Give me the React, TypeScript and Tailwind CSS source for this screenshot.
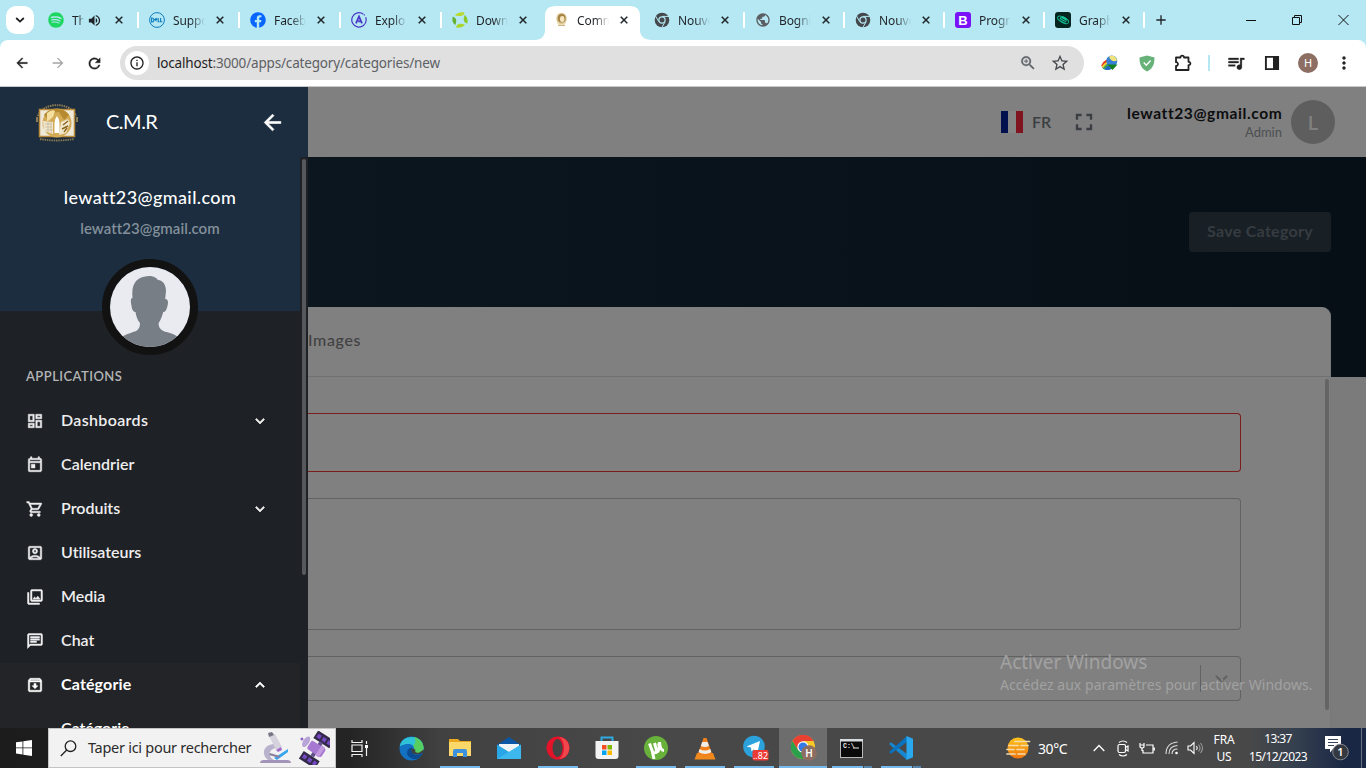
import React from "react";
import {
  MdOutlineDashboard, MdOutlineToday, MdOutlineShoppingCart, MdOutlineAccountBox,
  MdOutlinePhotoLibrary, MdOutlineChat, MdOutlineArchive, MdExpandMore, MdExpandLess,
  MdArrowBack, MdArrowForward, MdRefresh, MdFullscreen, MdVolumeUp, MdClose, MdAdd,
  MdStarBorder, MdQueueMusic, MdMoreVert, MdOutlineInfo, MdZoomIn, MdPublic,
} from "react-icons/md";
import { FaSpotify, FaFacebook } from "react-icons/fa";

const SEGOE = "font-['Noto_Sans',sans-serif]";
const MULI = "font-['Lato',sans-serif] [font-variant-ligatures:none]";
const BOLD_ICON = "[&>path]:stroke-current [&>path[fill=none]]:stroke-none";

const DellIcon = () => (
  <svg width="16" height="16" viewBox="0 0 16 16" fill="none" stroke="#0d7dbf">
    <circle cx="8" cy="8" r="7.400" strokeWidth="1" />
    <path d="M2.600 6v4h.6c2.300 0 2.300-4 0-4zM7.600 6.200 5.800 7.600 7.600 9.200M6.300 8.500 8.300 6.900M9.200 6v3.800h1.500M11.600 6v3.800h1.700" strokeWidth="1.100" />
  </svg>
);

const ApolloIcon = () => (
  <svg width="16" height="16" viewBox="0 0 16 16" fill="none" stroke="#4a35c8">
    <path d="M12.4 2.2A7.2 7.2 0 1 0 15.2 8 7 7 0 0 0 14.6 5.2" strokeWidth="1.2" />
    <path d="M5 11.3 8 4.4l3 6.9M7.2 9.4h2.4" strokeWidth="1.8" />
    <circle cx="13.4" cy="2.9" r=".7" fill="#4a35c8" stroke="none" />
  </svg>
);

const LeafRing = () => (
  <svg width="16" height="16" viewBox="0 0 16 16">
    <path d="M3 3.500C5 .5 9 0 12.500.5 12 3.500 9 4.500 6 4z" fill="#b9d92f" />
    <path d="M12.500 3C15.500 5 16 8 15.300 11.500c-2.600-.5-4.300-3-3.300-6z" fill="#8cc828" />
    <path d="M13 12.500C11 15.500 7.500 16 4 15.500c.3-3 3-4.300 6-3.500z" fill="#a9d52c" />
    <path d="M3.500 13C.5 11 0 8.500.7 4.500 3.300 5.500 5 7.500 4 10.500z" fill="#63b234" />
  </svg>
);

const Emblem = () => (
  <svg width="11" height="16" viewBox="0 0 11 16">
    <ellipse cx="5.500" cy="6.700" rx="5.200" ry="5.900" fill="#dcc796" />
    <ellipse cx="5.700" cy="6.300" rx="3.900" ry="4.300" fill="#a58244" />
    <ellipse cx="6.200" cy="7" rx="2.300" ry="3" fill="#f7e6bd" />
    <path d="M1.500 10l2 3h4l2-3" stroke="#e9d9b4" fill="none" strokeWidth="1.400" />
    <path d="M2 13.500h7" stroke="#cdb684" />
  </svg>
);

const ChromeGrey = () => (
  <svg width="16" height="16" viewBox="0 0 16 16">
    <circle cx="8" cy="8" r="7.300" fill="#44484c" />
    <circle cx="8" cy="8" r="3.700" fill="#b5e8f3" />
    <circle cx="8" cy="8" r="2.500" fill="#44484c" />
    <path d="M8 4.400h7.200M4.900 9.800 1.500 4M11.100 9.800l-3.400 6" stroke="#b5e8f3" strokeWidth="1" />
  </svg>
);

const BootstrapIcon = () => (
  <span className="flex size-4 items-center justify-center rounded-[3px] bg-[#7a12f8] font-['Liberation_Sans',sans-serif] text-[13px] font-bold leading-none text-white">B</span>
);

const GraphIcon = () => (
  <svg width="16" height="16" viewBox="0 0 16 16">
    <rect width="16" height="16" rx="3" fill="#04251f" />
    <ellipse cx="8" cy="7.800" rx="6" ry="2.700" transform="rotate(28 8 8)" fill="none" stroke="#0fb58d" />
    <ellipse cx="8" cy="7.500" rx="3.600" ry="2.900" transform="rotate(28 8 8)" fill="#14c79b" />
    <path d="M5 7.500l5 2.800M6 6l5 3" stroke="#04251f" strokeWidth=".8" />
  </svg>
);

type TabData = { label: string; icon: React.ReactNode; active?: boolean; audio?: boolean; sep?: boolean; narrow?: boolean };

const tabs: TabData[] = [
  { label: "Th", icon: <FaSpotify size={16} color="#1ed760" />, audio: true, sep: true },
  { label: "Suppo", icon: <DellIcon />, sep: true },
  { label: "Faceb", icon: <FaFacebook size={16} color="#0866ff" />, sep: true },
  { label: "Explo", icon: <ApolloIcon />, sep: true },
  { label: "Down", icon: <LeafRing /> },
  { label: "Comm", icon: <Emblem />, active: true },
  { label: "Nouve", icon: <ChromeGrey /> },
  { label: "Bogni", icon: <MdPublic size={18} color="#5b5f64" />, sep: true, narrow: true },
  { label: "Nouve", icon: <ChromeGrey />, sep: true, narrow: true },
  { label: "Progr", icon: <BootstrapIcon />, sep: true, narrow: true },
  { label: "Graph", icon: <GraphIcon />, sep: true, narrow: true },
];
tabs[6].sep = true;

function Tab({ t }: { t: TabData }) {
  return (
    <div className={`relative flex h-10 shrink-0 items-center ${t.narrow ? "w-[100px]" : "w-[101px]"}`}>
      {t.active && (
        <svg className="absolute -left-2 top-0" width="118" height="40" viewBox="0 0 118 40">
          <path d="M0 40C6 40 10 36 10 30V16Q10 6 20 6H95Q105 6 105 16V30C105 36 109 40 117 40Z" fill="#fff" />
        </svg>
      )}
      <div className="relative ml-[10px] flex size-4 shrink-0 items-center justify-center">{t.icon}</div>
      <div className={`relative ml-2 overflow-hidden whitespace-nowrap pt-[2px] text-[12px] tracking-[-0.1px] text-[#1f2328] ${SEGOE} ${t.audio ? "w-[12px]" : "w-[32px]"} [mask-image:linear-gradient(to_right,#000_55%,transparent)]`}>
        {t.label}
      </div>
      {t.audio && <MdVolumeUp className="relative ml-[3px] shrink-0" size={15} color="#1f2328" />}
      <MdClose className={`absolute left-[75px] top-[14px] text-[#1b1f23] ${BOLD_ICON}`} size={12} strokeWidth={1} />
      {t.sep && <div className="absolute right-0 top-3 h-4 w-[2px] bg-white" />}
    </div>
  );
}

function Browser() {
  return (
    <div className="shrink-0 bg-[#b5e8f3]">
      <div className="flex h-10 items-center">
        <div className="ml-[6px] mr-1 flex size-7 shrink-0 items-center justify-center rounded-[10px] bg-white">
          <svg width="10" height="6" viewBox="0 0 10 6" fill="none" stroke="#1f1f1f" strokeWidth="1.8"><path d="M1.2 1 5 4.6 8.800 1" /></svg>
        </div>
        {tabs.map((t, i) => <Tab key={i} t={t} />)}
        <MdAdd className="ml-[8px]" size={16} color="#1f2328" />
        <div className="ml-auto flex items-center">
          <svg width="106" height="12" viewBox="0 0 106 12" fill="none" stroke="#111" strokeWidth="1" className="mr-[17px]">
            <path d="M3 6.500h10" />
            <path d="M49.500 3.500h7v7h-7zM51.500 3.500v-2h7v7h-2" />
            <path d="M95.500 1l10 10M105.500 1l-10 10" />
          </svg>
        </div>
      </div>
      <div className="flex h-[46px] items-center rounded-t-[8px] bg-white">
        <div className="ml-[14px] flex items-center gap-5 text-[#222]">
          <MdArrowBack className={BOLD_ICON} size={16} strokeWidth={0.5} />
          <MdArrowForward size={16} color="#a4a4a4" />
          <MdRefresh className={BOLD_ICON} size={17} strokeWidth={0.5} />
        </div>
        <div className="ml-[17px] flex h-[34px] w-[964px] items-center rounded-full bg-[#e0e0e0]">
          <div className="ml-[5px] flex size-6 items-center justify-center rounded-full bg-white">
            <MdOutlineInfo size={16} color="#222" />
          </div>
          <div className={`ml-2 text-[13.5px] tracking-[-0.17px] text-[#5d6165] ${SEGOE}`}>
            <span className="text-[#1f1f1f]">localhost</span>:3000/apps/category/categories/new
          </div>
          <MdZoomIn className={`ml-auto mr-[13px] text-[#5f6368] ${BOLD_ICON}`} size={18} strokeWidth={0.4} />
          <MdStarBorder className="mr-[14px]" size={20} color="#46494d" />
        </div>
        <svg className="ml-[17px]" width="18" height="18" viewBox="0 0 18 18">
          <ellipse cx="8" cy="11" rx="7.400" ry="4.800" transform="rotate(-18 8 11)" fill="#2368c8" />
          <path d="M1 12C3 7 8 5 12 6" stroke="#e53b22" strokeWidth="2" fill="none" />
          <path d="M1.500 13.500c2-4 6-6 10-5" stroke="#f7d52b" strokeWidth="2" fill="none" />
          <path d="M2.500 15c2-3 5-5 8-4.500" stroke="#3fae3a" strokeWidth="1.500" fill="none" />
          <circle cx="10.800" cy="7" r="5.500" fill="#357fd5" />
          <path d="M8 2.500c4-2 7.500.5 8 4-3 2-7 0-8-4z" fill="#f1e27a" />
          <path d="M6.500 10.500h10L11.500 16z" fill="#15821d" />
        </svg>
        <svg className="ml-[20px]" width="16" height="17" viewBox="0 0 16 17">
          <path d="M8 .5 15.500 2.500C15.500 9 14 13.500 8 16.500 2 13.500.5 9 .5 2.500z" fill="#67b279" />
          <path d="M4.700 7.500 7.300 10.200 11.600 5.500" fill="none" stroke="#fff" strokeWidth="1.400" />
        </svg>
        <svg className="ml-[19px]" width="18" height="18" viewBox="0 0 18 18" fill="none" stroke="#222" strokeWidth="1.800">
          <path d="M2 3.500h4.500c-.4-2.500 3.900-2.500 3.500 0h4.500v4.300c2.500-.3 2.500 3.700 0 3.400v4.800H2v-4c2.600.2 2.600-4 0-3.800z" strokeLinejoin="round" />
        </svg>
        <div className="ml-[16px] h-4 w-[2px] bg-[#b5e8f3]" />
        <MdQueueMusic className={`ml-[16px] text-[#222] ${BOLD_ICON}`} size={20} strokeWidth={0.4} />
        <svg className="ml-[18px]" width="16" height="16" viewBox="0 0 16 16"><path d="M1.900 1.900h12.200v12.200H1.900z" fill="none" stroke="#222" strokeWidth="1.900" /><path d="M9 1h6v14H9z" fill="#222" /></svg>
        <div className={`ml-[18px] flex size-5 items-center justify-center rounded-full bg-[#8d6e63] text-[11px] text-white ${SEGOE}`}>H</div>
        <MdMoreVert className="ml-[16px]" size={20} color="#222" />
      </div>
      <div className="h-px bg-[#c8c8c8]" />
    </div>
  );
}

const menu = [
  { label: "Dashboards", Icon: MdOutlineDashboard, more: true },
  { label: "Calendrier", Icon: MdOutlineToday },
  { label: "Produits", Icon: MdOutlineShoppingCart, more: true },
  { label: "Utilisateurs", Icon: MdOutlineAccountBox },
  { label: "Media", Icon: MdOutlinePhotoLibrary },
  { label: "Chat", Icon: MdOutlineChat },
];

const Logo = () => (
  <svg width="44" height="40" viewBox="0 0 44 40">
    <path d="M3 13C8-1.500 36-1.500 41 13" fill="none" stroke="#8c7a55" strokeWidth="2" strokeDasharray="1.500 .8" />
    <path d="M5 36q17 3 34 0" fill="none" stroke="#8c7a55" strokeWidth="1.800" strokeDasharray="1.500 .8" />
    <path d="M2 19v-5M42 19v-5" stroke="#8c7a55" strokeWidth="2" />
    <rect x="4.500" y="6.500" width="35" height="27" fill="#efe9da" stroke="#b98a3c" strokeWidth="1.500" />
    <circle cx="22" cy="20" r="14.500" fill="#d3aa55" />
    <path d="M9 12C14 4 29 4 34 12L29 17 24 9 17 10 14 17z" fill="#b58a30" />
    <path d="M12 10q5-4 8-2l-2 6-6 5z" fill="#f4dfa0" />
    <path d="M8 18l10 1v12l-9-3zM26 19l7-3 2 4-4 10-7 2z" fill="#efe6ce" />
    <path d="M10 21h7M10 24h7M11 27h7M13 18v11M16 18v12" stroke="#c1b08a" strokeWidth=".6" />
    <path d="M28 22l5-4M27 26l6-3M29 29l3-4" stroke="#8c671e" strokeWidth="1.400" />
    <path d="M19.500 30V20q0-4 2.500-7 2.500 3 2.500 7v10z" fill="#fff" />
  </svg>
);

function Sidebar() {
  return (
    <aside className={`flex w-[308px] shrink-0 flex-col bg-[#1e2125] ${MULI}`}>
      <div className="flex h-[70px] shrink-0 items-center bg-[#1b2d3e]">
        <div className="ml-[35px] mt-[2px]"><Logo /></div>
        <div className="mb-[2px] ml-[27px] w-[56px] text-[20px] tracking-[-0.5px] text-white">C.M.R</div>
        <MdArrowBack className={`ml-auto mr-[23px] text-white ${BOLD_ICON}`} size={25} strokeWidth={0.6} />
      </div>
      <div className="flex min-h-0 flex-1">
        <div className="flex w-[300px] flex-col overflow-hidden">
          <div className="flex h-[154px] shrink-0 flex-col items-center bg-[#1b2d3e] pt-[27px]">
            <div className="text-[18px] font-medium leading-[26px] tracking-[0.38px] text-white">lewatt23@gmail.com</div>
            <div className="mt-[7px] text-[15px] font-semibold leading-[22px] tracking-[0.05px] text-[#83909b]">lewatt23@gmail.com</div>
            <div className="relative mt-[20px] size-24 shrink-0 overflow-hidden rounded-full border-8 border-[#121212]">
              <svg width="80" height="80" viewBox="0 0 80 80">
                <rect width="80" height="80" fill="#e9ebf0" />
                <path d="M22.500 31C21 16 27 9.500 39 9c5 0 8 2.500 9 4 5 0 8 5 8 11l-.8 8c3 0 3.500 3 2 8-.8 3-2 5-4 5-1 4-3 9-4.500 11-.5 5 3 8 8 9 7 2 11 4 15 8v17H8V73c5-5 10-6 15-8 5-1 7-4 7-9-2-2-4-7-4.500-11-2 0-3.500-2-4-6-1-5-1-8 1-8z" fill="#787e86" />
              </svg>
            </div>
          </div>
          <div className="mt-[55px] flex h-[22px] shrink-0 items-center pl-[26px] text-[13px] font-semibold tracking-[0.45px] text-[#b4b5b6]">APPLICATIONS</div>
          <div className="mt-[11px] flex shrink-0 flex-col text-[16px] font-semibold text-[#eeeeef]">
            {menu.map(({ label, Icon, more }) => (
              <div key={label} className="flex h-11 items-center pl-[26px]">
                <Icon className={BOLD_ICON} size={18} strokeWidth={0.6} />
                <span className={`mb-[2px] ml-[17px] ${label === "Dashboards" ? "tracking-[0.35px]" : ""}`}>{label}</span>
                {more && <MdExpandMore className={`ml-auto mr-[31px] ${BOLD_ICON}`} size={18} strokeWidth={0.9} />}
              </div>
            ))}
          </div>
          <div className="h-[90px] shrink-0 bg-[#232427] text-[16px] font-bold text-white">
            <div className="flex h-11 items-center pl-[26px]">
              <MdOutlineArchive className={BOLD_ICON} size={18} strokeWidth={0.6} />
              <span className="mb-[2px] ml-[17px] tracking-[0.15px]">Catégorie</span>
              <MdExpandLess className={`ml-auto mr-[31px] ${BOLD_ICON}`} size={18} strokeWidth={0.9} />
            </div>
            <div className="flex h-11 items-center pb-[2px] pl-[61px] font-semibold">Catégorie</div>
          </div>
        </div>
        <div className="flex w-2 justify-center pt-[2px]"><div className="h-[416px] w-1 rounded-full bg-[#57585b]" /></div>
      </div>
    </aside>
  );
}

function Content() {
  return (
    <main className={`flex min-w-0 flex-1 flex-col bg-[#7b7b7b] ${MULI}`}>
      <header className="flex h-[70px] shrink-0 items-center justify-end bg-[#808080] text-[#3b3e42]">
        <div className="flex h-[22px] w-[22px]">
          <div className="w-[7px] bg-[#00114e]" /><div className="w-[8px] bg-[#868686]" /><div className="w-[7px] bg-[#7f141f]" />
        </div>
        <span className="ml-[9px] w-[20px] text-[16px] font-semibold">FR</span>
        <MdFullscreen className="ml-[18px]" size={28} />
        <div className="ml-[29px] flex flex-col items-end">
          <span className="w-[155px] whitespace-nowrap text-[15.500px] font-bold leading-5 tracking-[0.6px] text-[#0c0d0f]">lewatt23@gmail.com</span>
          <span className="text-[13px] leading-[18px] text-[#4c4f52]">Admin</span>
        </div>
        <div className="ml-[9px] mr-[31px] flex size-11 items-center justify-center rounded-full bg-[#5e5e5e] text-[20px] font-semibold text-[#808080]">L</div>
      </header>
      <div className="flex h-[571px] flex-col bg-[linear-gradient(to_right,#0c161f,#060f16)] bg-[length:100%_220px] bg-no-repeat pr-[35px]">
        <div className="flex h-[150px] shrink-0 items-center justify-end">
          <button className="flex h-10 w-[142px] items-center justify-center rounded bg-[#181f25] pb-[2px] text-[16px] font-bold tracking-[0.3px] text-[#363c41]">Save Category</button>
        </div>
        <div className="flex min-h-0 flex-1 flex-col overflow-hidden rounded-tr-[9px] border-r border-[#787878] bg-[#808080]">
          <div className="flex h-[70px] shrink-0 items-center border-b border-[#717171] pb-[4px] text-[16px] font-medium tracking-[0.65px] text-[#404142]">Images</div>
          <div className="flex min-h-0 flex-1">
            <div className="flex flex-1 flex-col pt-9">
              <div className="h-[59px] w-[933px] shrink-0 rounded-r border border-l-0 border-[#7a1d1b]" />
              <div className="mt-[26px] h-[132px] w-[933px] shrink-0 rounded-r border border-l-0 border-[#626262]" />
              <div className="mt-[26px] flex h-[45px] w-[933px] shrink-0 items-center justify-end rounded-r border border-l-0 border-[#626262]">
                <div className="h-[27px] w-px bg-[#626262]" />
                <svg className="ml-[14px] mr-[12px]" width="13" height="8" viewBox="0 0 13 8" fill="none" stroke="#626262" strokeWidth="2.200" strokeLinecap="round"><path d="M1.500 1.500l5 4.500 5-4.500" /></svg>
              </div>
            </div>
            <div className="mr-[1px] mt-[2px] h-[331px] w-1 rounded-full bg-[#646464]" />
          </div>
        </div>
      </div>
    </main>
  );
}

const EdgeIcon = () => (
  <svg width="25" height="25" viewBox="0 0 25 25">
    <circle cx="12.500" cy="12.500" r="12" fill="#1371c2" />
    <path d="M.8 10C3-2 23-2 24.500 11c.5 5-3 7-7 7-3 0-4-1.500-3-3 2-3 0-7-5-7S2 10 .8 10z" fill="#2fc1d8" />
    <path d="M15 1c6 1 9 6 9.500 10 .5 5-3 7-7 7-3 0-4-1.500-3-3 1-2 1-4-.5-5.500 3-2 3-6 1-8.500z" fill="#57cf60" />
    <path d="M8 17c0-4 3-6 6-5-2 1-2 4 .5 6 3 2 6 1 9-1-2 6-9 8-13 4-1.500-1-2.500-2-2.500-4z" fill="#0c4a92" />
    <path d="M12.500 12.500c-1 3 1 6 5 6 3 0 5-1 6.500-2l.5-3-4 3c-4 1-5-1-4-3z" fill="#3c4142" />
  </svg>
);
const FolderIcon = () => (
  <svg width="22" height="20" viewBox="0 0 22 20">
    <path d="M0 1h9l2 2h11v15H0z" fill="#e9a820" /><path d="M0 4h22v14H0z" fill="#fbd868" />
    <path d="M4 19v-6q0-2 2-2h10q2 0 2 2v6h-4v-4H8v4z" fill="#3b91dc" />
  </svg>
);
const MailIcon = () => (
  <svg width="24" height="23" viewBox="0 0 24 23">
    <path d="M0 8 12 0l12 8v14H0z" fill="#0b57a5" /><path d="M2 7h20v9H2z" fill="#f1f4f6" />
    <path d="M0 7.500 12 15 24 7.500V22H0z" fill="#28a6e6" /><path d="M24 7.500V22H0z" fill="#4fc7f5" opacity=".55" />
  </svg>
);
const OperaIcon = () => (
  <svg width="24" height="24" viewBox="0 0 24 24">
    <ellipse cx="12" cy="12" rx="11.500" ry="11.500" fill="#e3142a" />
    <path d="M12 1c15 0 15 22 0 22 3 0 6-5 6-11S15 1 12 1z" fill="#f2464d" />
    <ellipse cx="11.500" cy="12" rx="5" ry="9" fill="#444" />
  </svg>
);
const StoreIcon = () => (
  <svg width="24" height="24" viewBox="0 0 24 24">
    <path d="M6.500 6V1.500h11V6" fill="none" stroke="#2fa9e2" strokeWidth="2" />
    <path d="M.5 5h23v15q0 3-3 3h-17q-3 0-3-3z" fill="#f3f3f3" />
    <path d="M7 9h4.500v4.500H7z" fill="#f25022" /><path d="M12.500 9H17v4.500h-4.500z" fill="#7fba00" />
    <path d="M7 14.500h4.500V19H7z" fill="#00a4ef" /><path d="M12.500 14.500H17V19h-4.500z" fill="#ffb900" />
  </svg>
);
const TorrentIcon = () => (
  <svg width="24" height="24" viewBox="0 0 24 24">
    <circle cx="12" cy="12" r="12" fill="#68b13a" />
    <path d="M5.500 7.500 8 14.500q1.500 3.500 5 1.500L10.500 7M13 16q3.500-2 1.500-9M15.500 6q.5 8.500 4.500 8.500M8 14l2 9" fill="none" stroke="#fff" strokeWidth="3" />
  </svg>
);
const VlcIcon = () => (
  <svg width="22" height="23" viewBox="0 0 22 23">
    <path d="M3 16h16l2.500 6.500H.5z" fill="#f08a1d" /><path d="M9.500 1h3L18 17q-7 4-14 0z" fill="#f2801a" />
    <path d="M8.200 5h5.400l1.400 4q-4 2-8.200 0zM5.600 12q5 3 10.700 0l1 3.200q-6 3.500-12.800 0z" fill="#f1eee8" />
  </svg>
);
const TelegramIcon = () => (
  <svg className="ml-[3px]" width="26" height="26" viewBox="0 0 26 26">
    <circle cx="11" cy="11.500" r="10.800" fill="#2ca2dc" /><path d="M3.500 11.500 17 6l-2.500 11.500-4-3-2 2-.5-4z" fill="#fff" />
    <rect x="9.500" y="15" width="16" height="10.500" rx="2" fill="#ee3b36" />
    <text x="17.500" y="23.500" textAnchor="middle" fontFamily="Noto Sans" fontSize="9" fill="#fff">..82</text>
  </svg>
);
const ChromeIcon = () => (
  <svg className="ml-[2px]" width="26" height="26" viewBox="0 0 26 26">
    <circle cx="12" cy="12" r="12" fill="#f9c928" />
    <path d="M1.500 6A12 12 0 0 1 22.500 6H12L7 15z" fill="#ea4031" /><path d="M1.500 6A12 12 0 0 0 12 24l5-9H7z" fill="#2b9f4b" />
    <circle cx="12" cy="12" r="5.700" fill="#fff" /><circle cx="12" cy="12" r="4.500" fill="#347be8" />
    <circle cx="18" cy="18" r="7.800" fill="#8d6e63" />
    <text x="18" y="21.500" textAnchor="middle" fontFamily="Noto Sans" fontSize="10" fontWeight="600" fill="#fff">H</text>
  </svg>
);
const CmdIcon = () => (
  <svg className="mr-[2px]" width="23" height="19" viewBox="0 0 23 19">
    <rect x=".5" y=".5" width="22" height="18" fill="#0a0a0a" stroke="#b9b9b9" /><path d="M0 0h23v2.500H0z" fill="#d9dcde" />
    <text x="3" y="9" fontFamily="Liberation Mono" fontSize="6.500" fontWeight="700" fill="#eee">C:\</text><path d="M13 9h6" stroke="#eee" />
  </svg>
);
const CodeIcon = () => (
  <svg width="24" height="24" viewBox="0 0 24 24">
    <path d="M0 8 2 6.300 18 18v6z" fill="#1687d0" /><path d="M0 16l2 1.700L18 6V0z" fill="#0b72bd" /><path d="M17.500 0 24 2.700v18.600L17.500 24z" fill="#29a7ef" />
  </svg>
);

const apps = [
  { I: EdgeIcon, u: "" },
  { I: FolderIcon, u: "line" },
  { I: MailIcon, u: "" },
  { I: OperaIcon, u: "line" },
  { I: StoreIcon, u: "" },
  { I: TorrentIcon, u: "line" },
  { I: VlcIcon, u: "line" },
  { I: TelegramIcon, u: "line" },
  { I: ChromeIcon, u: "active" },
  { I: CmdIcon, u: "stack" },
  { I: CodeIcon, u: "stack" },
];

const Microscope = () => (
  <svg width="32" height="32" viewBox="0 0 32 32">
    <path d="M0 31q0-3 4-3h23q4 0 4 3z" fill="#a294b8" />
    <path d="M14 12C3 13 1 22 8 28h6c-7-4-5-11 2-12z" fill="#b9b2cd" />
    <path d="M9 4l6-2 7 13-6 3z" fill="#d5d2de" /><path d="M8 1l4-1 2 3-5 2z" fill="#777486" />
    <path d="M16 18l5-3 1 3-4 2z" fill="#a06cc9" /><path d="M14 26l14-9v3l-11 8z" fill="#38a6ee" /><path d="M10 21l10 3-1 2-10-3z" fill="#8d819f" />
  </svg>
);
const Satellite = () => (
  <svg width="32" height="34" viewBox="0 0 32 34">
    <g transform="rotate(33 16 17)">
      <rect x="10" y="0" width="19" height="9" fill="#332a4a" /><rect x="9" y="25" width="19" height="9" fill="#332a4a" />
      <path d="M12 2.500h4v4h-4zM18 2.500h4v4h-4zM24 2.500h3.500v4H24zM11 27.500h4v4h-4zM17 27.500h4v4h-4zM23 27.500h3.500v4H23z" fill="#7549c2" />
      <path d="M17 8h4v17h-4z" fill="#62518b" /><rect x="10" y="11.500" width="17" height="10" rx="2" fill="#a678d2" /><rect x="21" y="10.500" width="4" height="12" fill="#c39ade" />
      <ellipse cx="6" cy="16" rx="3" ry="6" fill="#b8a4d6" /><circle cx="1" cy="16" r="1.500" fill="#8e65c4" />
    </g>
  </svg>
);

function Taskbar() {
  return (
    <footer className={`flex h-10 shrink-0 items-center bg-[linear-gradient(to_right,#1c1c1c_0,#242424_350px,#414141_440px,#484848_650px,#484848_1250px,#35404f_1295px,#1a2744_1345px,#1a2744_1366px)] text-white ${SEGOE}`}>
      <div className="flex w-12 justify-center">
        <svg width="16" height="16" viewBox="0 0 16 16" fill="#fff"><path d="M0 2.300 6.500 1.400v6.100H0zM7.300 1.300 16 0v7.500H7.300zM0 8.300h6.500v6.200L0 13.600zM7.300 8.300H16V16l-8.700-1.300z" /></svg>
      </div>
      <div className="flex h-10 w-72 shrink-0 items-center border border-[#c4c4c4] bg-[#f2f2f2]">
        <svg className="ml-[11px] shrink-0" width="17" height="17" viewBox="0 0 17 17" fill="none" stroke="#222" strokeWidth="1.300"><circle cx="10.500" cy="6.200" r="5.300" /><path d="M6.700 10 .8 16" /></svg>
        <span className="ml-[11px] w-[164px] shrink-0 whitespace-nowrap text-[14.500px] tracking-[-0.28px] text-[#2c2c2c]">Taper ici pour rechercher</span>
        <span className="ml-[8px] shrink-0"><Microscope /></span><span className="ml-[6px] shrink-0"><Satellite /></span>
      </div>
      <div className="flex w-[51px] pl-[15px]">
        <svg width="18" height="17" viewBox="0 0 18 17" fill="none" stroke="#f2f2f2" strokeWidth="1.200"><path d="M1 0v2.500h10V0M1 17v-2.500h10V17M1 5h10v6.500H1zM15.500 1v3M15.500 8v8" /><path d="M14 5h3v3h-3z" fill="#fff" stroke="none" /></svg>
      </div>
      <div className="flex">
        {apps.map(({ I, u }, i) => (
          <div key={i} className={`mr-px flex h-10 w-12 flex-col items-center ${u === "active" ? "bg-[#6d6d6d]" : ""}`}>
            <div className="flex h-[38px] items-center justify-center pt-[2px]"><I /></div>
            {u === "line" && <div className="h-[2px] w-10 bg-[#76b9ed]" />}
            {u === "active" && <div className="h-[2px] w-12 bg-[#76b9ed]" />}
            {u === "stack" && <div className="flex h-[2px] w-10"><div className="w-[31px] bg-[#76b9ed]" /><div className="ml-px w-2 bg-[#5787ae]" /></div>}
          </div>
        ))}
      </div>
      <div className="ml-auto flex items-center">
        <svg width="25" height="22" viewBox="0 0 25 22">
          <defs><linearGradient id="sun" x1="0" y1="0" x2="0" y2="1"><stop stopColor="#fdc51a" /><stop offset="1" stopColor="#ef7410" /></linearGradient></defs>
          <circle cx="12" cy="11" r="10.500" fill="url(#sun)" />
          <g stroke="#f3ddae" strokeWidth="1.700" strokeLinecap="round"><path d="M9 4.500h14.500M3 8.500h9M15 8.500h7M11 12.500h7M1 12.500h7M5 12.500h2M1 17h8M12 17h7" /></g>
        </svg>
        <span className="ml-[7px] w-[31px] whitespace-nowrap text-[14px] tracking-[-0.4px]">30°C</span>
        <svg className="ml-[24px]" width="12" height="8" viewBox="0 0 12 8" fill="none" stroke="#fff" strokeWidth="1.300"><path d="M.7 7 6 1.500 11.300 7" /></svg>
        <svg className="ml-[12px]" width="12" height="17" viewBox="0 0 12 17" fill="none" stroke="#fff" strokeWidth="1.200"><rect x="1" y="4.500" width="7.500" height="8" rx="1.500" /><path d="M8.500 7.500l2.500-1.500v5L8.500 9.500M2 2.500q4-3 8 0M2 14.500q4 3 8 0" /></svg>
        <svg className="ml-[10px]" width="16" height="13" viewBox="0 0 16 13" fill="none" stroke="#fff" strokeWidth="1.200"><path d="M7 3h7v8H4V8M15.300 5.500v3M1 1v2h4V1M1 3v2l2 1.500L5 5V3M3 6v3" /></svg>
        <svg className="ml-[10px]" width="14" height="14" viewBox="0 0 14 14" fill="none" stroke="#ddd" strokeWidth="1.100"><path d="M1 13Q1 2 12.500 1M4 13Q4 5 12.500 4.500M7 13Q7 8 12.500 8" /><circle cx="11.500" cy="12" r="1.300" fill="#fff" stroke="none" /></svg>
        <svg className="ml-[8px]" width="17" height="14" viewBox="0 0 17 14" fill="none" stroke="#fff" strokeWidth="1.100"><path d="M1 5h2.500L7 1.500v11L3.500 9H1zM9.500 5q1.500 2 0 4" /><path d="M11.500 3.500q3 3.500 0 7M13.500 2q4 5 0 10" stroke="#999" /></svg>
        <div className="ml-[7px] flex w-[26px] flex-col items-center text-[12px] leading-[17px] tracking-[-0.2px]"><span>FRA</span><span>US</span></div>
        <div className="ml-[10px] flex w-[62px] flex-col items-center whitespace-nowrap text-[12px] leading-[18px] tracking-[-0.6px]"><span>13:37</span><span>15/12/2023</span></div>
        <svg className="ml-[15px]" width="26" height="26" viewBox="0 0 26 26">
          <path d="M1 1h16v13H9l-3 3.500V14H1z" fill="#fff" /><path d="M4 4.500h10M4 7.500h10M4 10.500h6" stroke="#39435a" />
          <circle cx="16.500" cy="17" r="7.800" fill="#343840" stroke="#83868d" />
          <text x="16.500" y="21" textAnchor="middle" fontFamily="Noto Sans" fontSize="11" fontWeight="600" fill="#fff">1</text>
        </svg>
        <div className="ml-[11px] mr-[4px] h-10 w-px bg-[#677086]" />
      </div>
    </footer>
  );
}

export default function App() {
  return (
    <div className="relative flex h-[768px] w-[1366px] flex-col overflow-hidden">
      <Browser />
      <div className="flex min-h-0 flex-1 overflow-hidden"><Sidebar /><Content /></div>
      <Taskbar />
      <div className={`absolute left-[1000px] top-[649px] whitespace-nowrap text-[#a2a2a2] ${SEGOE}`}>
        <div className="text-[19px] leading-[26px]">Activer Windows</div>
        <div className="text-[14px] leading-[20px] tracking-[0.05px]">Accédez aux paramètres pour activer Windows.</div>
      </div>
    </div>
  );
}
